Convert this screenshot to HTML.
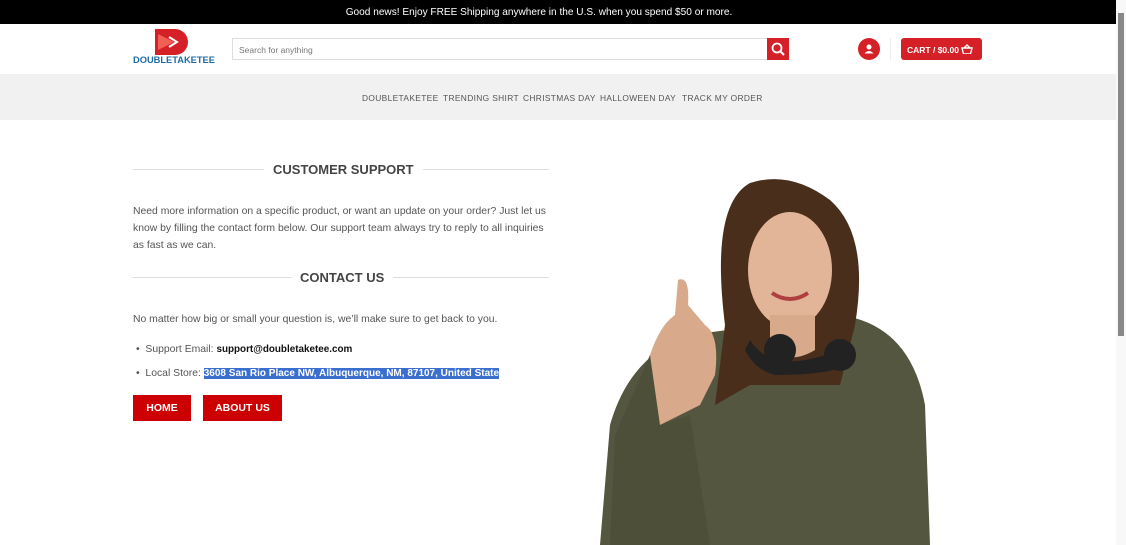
<!DOCTYPE html>
<html><head><meta charset="utf-8"><style>
*{margin:0;padding:0;box-sizing:border-box}
body{width:1126px;height:545px;overflow:hidden;background:#fff;font-family:"Liberation Sans",sans-serif;position:relative;color:#555}
.top{position:absolute;left:0;top:0;width:1116px;height:24px;background:#000;color:#fff;font-size:10.1px;text-align:center;line-height:25px;padding-right:38px}
.hdr{position:absolute;left:0;top:24px;width:1116px;height:50px;background:#fff}
.nav{position:absolute;left:0;top:74px;width:1116px;height:46px;background:#f1f1f1;font-size:8.4px;letter-spacing:.35px;color:#555}
.nav span{position:absolute;top:19px;white-space:nowrap}
.search{position:absolute;left:232px;top:38px;width:536px;height:22px;border:1px solid #ddd;font-size:8.5px;color:#777;padding:6px 6px}
.sbtn{position:absolute;left:767px;top:38px;width:22px;height:22px;background:#d52028}
.user{position:absolute;left:858px;top:38px;width:22px;height:22px;border-radius:50%;background:#d52028}
.cart{position:absolute;left:901px;top:38px;width:81px;height:22px;border-radius:3px;background:#d52028;color:#fff;font-size:8.5px;font-weight:bold;padding:6px 6px}
h2{position:absolute;font-size:13px;color:#444;font-weight:bold;background:#fff;padding:0 9px}
.line{position:absolute;height:1px;background:#ddd}
p{position:absolute;font-size:10.4px;line-height:17px;color:#555}
.btn{position:absolute;top:395px;height:26px;background:#c00;color:#fff;font-size:10.5px;font-weight:bold;text-align:center;line-height:26px}
.sb{position:absolute;left:1116px;top:0;width:10px;height:545px;background:#f8f8f8}
</style></head><body>
<div class="top">Good news! Enjoy FREE Shipping anywhere in the U.S. when you spend $50 or more.</div>
<div class="hdr"></div>
<svg style="position:absolute;left:155px;top:29px" width="35" height="26"><path d="M0 0h20a13 13 0 0 1 0 26H0z" fill="#d52028"/><path d="M3 5l16 8-16 8z" fill="#f06055"/><path d="M14 8l8 5-8 5" fill="none" stroke="#fff" stroke-width="2"/></svg>
<div style="position:absolute;left:133px;top:55px;font-size:9.3px;font-weight:bold;color:#1e6ca3">DOUBLETAKETEE</div>
<div class="search">Search for anything</div>
<div class="sbtn"><svg width="22" height="22"><circle cx="10" cy="10" r="4.5" fill="none" stroke="#fff" stroke-width="1.8"/><path d="M13.5 13.5l3.5 3.5" stroke="#fff" stroke-width="2"/></svg></div>
<div class="user"><svg width="22" height="22"><circle cx="11" cy="9" r="2.5" fill="#fff"/><path d="M6.5 15.5q4.5-5 9 0z" fill="#fff"/></svg></div>
<div style="position:absolute;left:890px;top:38px;width:1px;height:22px;background:#eee"></div>
<div class="cart">CART / $0.00 <svg width="12" height="10" style="vertical-align:-1px"><path d="M1 4h10l-1.5 6h-7z M3 4l3-3 3 3" fill="none" stroke="#fff" stroke-width="1.4"/></svg></div>
<div class="nav"><span style="left:362px">DOUBLETAKETEE</span><span style="left:443px">TRENDING SHIRT</span><span style="left:523px">CHRISTMAS DAY</span><span style="left:600px">HALLOWEEN DAY</span><span style="left:682px">TRACK MY ORDER</span></div>
<div class="line" style="left:133px;top:169px;width:416px"></div>
<h2 style="left:264px;top:162px">CUSTOMER SUPPORT</h2>
<p style="left:133px;top:203px;width:420px">Need more information on a specific product, or want an update on your order? Just let us know by filling the contact form below. Our support team always try to reply to all inquiries as fast as we can.</p>
<div class="line" style="left:133px;top:277px;width:416px"></div>
<h2 style="left:291px;top:270px">CONTACT US</h2>
<p style="left:133px;top:311px">No matter how big or small your question is, we’ll make sure to get back to you.</p>
<p style="left:136px;top:341px">•&nbsp; Support Email: <b style="color:#111;font-size:9.9px">support@doubletaketee.com</b></p>
<p style="left:136px;top:365px">•&nbsp; Local Store: <b style="color:#fff;background:#3a6fd0;font-size:10px">3608 San Rio Place NW, Albuquerque, NM, 87107, United State</b></p>
<div class="btn" style="left:133px;width:58px">HOME</div>
<div class="btn" style="left:203px;width:79px">ABOUT US</div>
<svg style="position:absolute;left:590px;top:175px" width="360" height="370">
<path d="M10 370 L20 250 Q40 180 100 160 L250 140 Q320 150 335 230 L340 370z" fill="#55563f"/>
<path d="M160 8 Q120 30 135 150 L125 230 L160 210 L250 210 L265 150 Q280 60 240 25 Q200 -5 160 8z" fill="#4a2e1c"/>
<ellipse cx="200" cy="95" rx="42" ry="58" fill="#e2b498"/>
<path d="M180 140 L180 175 Q200 190 225 175 L225 140z" fill="#d9a98c"/>
<path d="M160 165 Q185 205 260 170 L265 185 Q250 200 185 200 Q165 195 155 175z" fill="#222"/>
<circle cx="190" cy="175" r="16" fill="#222"/><circle cx="250" cy="180" r="16" fill="#222"/>
<path d="M182 118 Q200 130 218 118" stroke="#b04040" stroke-width="4" fill="none"/>
<path d="M88 105 Q100 100 98 130 L115 150 Q130 160 125 200 L110 230 L70 250 Q55 230 60 180 Q70 150 85 140z" fill="#d9a98c"/>
<path d="M60 180 L70 250 L100 240 L120 370 L20 370 L25 260z" fill="#4e4f39"/>
</svg>
<div class="sb"><div style="position:absolute;left:2px;top:13px;width:6px;height:323px;background:#888"></div></div>
</body></html>
